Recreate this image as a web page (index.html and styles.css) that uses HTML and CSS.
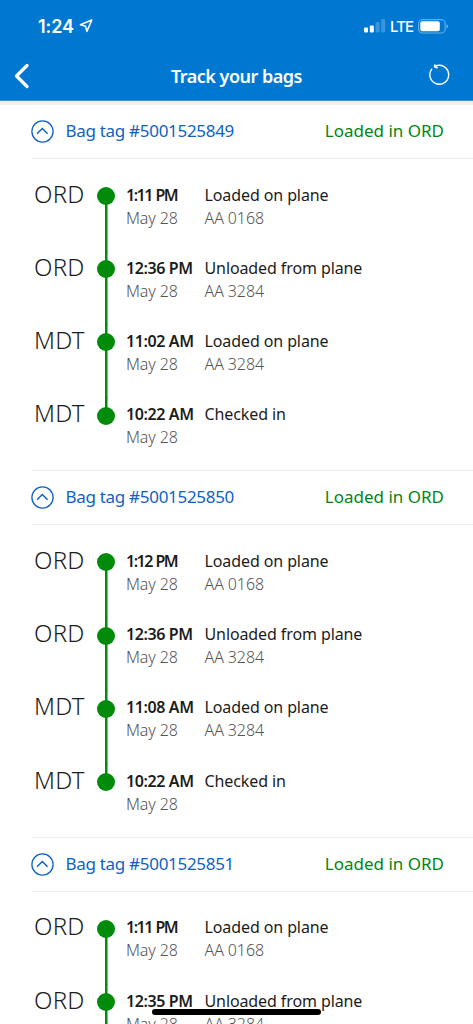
FILE: index.html
```html
<!DOCTYPE html>
<html lang="en">
<head>
    <meta charset="UTF-8">
    <meta name="viewport" content="width=device-width, initial-scale=1.0">
    <title>Track your bags</title>
    <link rel="stylesheet" href="styles.css">
</head>
<body>

<header class="header">
    <div class="status-bar">
        <span class="clock">1:24</span>
        <svg class="location" width="14" height="14" viewBox="0 0 14 14"><path d="M12.8 1 1.4 5.8l5.2 1.4 1.3 5.2z" fill="none" stroke="#fff" stroke-width="1.5" stroke-linejoin="round"/></svg>
        <svg class="signal" width="22" height="14" viewBox="0 0 22 14" fill="#fff">
            <rect x="0" y="8.5" width="4" height="5" rx="1"/>
            <rect x="5.8" y="6.5" width="4" height="7" rx="1"/>
            <rect x="11.6" y="3" width="4" height="10.5" rx="1" opacity=".22"/>
            <rect x="17.2" y="0" width="4" height="13.5" rx="1" opacity=".22"/>
        </svg>
        <span class="network">LTE</span>
        <svg class="battery" width="31" height="15" viewBox="0 0 31 15">
            <rect x=".6" y=".6" width="26.6" height="13.4" rx="4" fill="none" stroke="#fff" stroke-width="1.1" opacity=".4"/>
            <rect x="2.3" y="2.3" width="19.5" height="10" rx="2" fill="#fff"/>
            <path d="M28.5 5v4.6q1.5-.7 1.5-2.3T28.5 5z" fill="#fff" opacity=".45"/>
        </svg>
    </div>
    <div class="nav-bar">
        <svg class="back" width="16" height="26" viewBox="0 0 16 26"><path d="M13 2.5 2.5 13 13 23.5" fill="none" stroke="#fff" stroke-width="3.2" stroke-linecap="round" stroke-linejoin="round"/></svg>
        <h1>Track your bags</h1>
        <svg class="refresh" width="22" height="22" viewBox="0 0 22 22" fill="none" stroke="#fff" stroke-width="1.4">
            <path d="M7.2 2.3A9.4 9.4 0 1 1 4 4.8"/>
            <path d="M7.1.3 6.6 2.7l3 1.3" stroke-width="1.6"/>
        </svg>
    </div>
</header>

<main id="bags"></main>

<div class="home-indicator"></div>

<script src="script.js"></script>
</body>
</html>
```
FILE: styles.css
```css
body {
    margin: 0;
    height: 1024px;
    overflow: hidden;
    background-color: white;
    color: #1c1c1c;
    font-family: "Noto Sans", sans-serif;
}

.header {
    height: 100px;
    background-color: #0078d2;
    border-bottom: 1px solid #4b90c7;
    box-shadow: 0 4px 0 #eef0f3;
    color: white;
}

.status-bar {
    display: flex;
    align-items: center;
    height: 52px;
    padding: 0 24px 0 38px;
}

.clock {
    width: 37px;
    font-family: Inter, sans-serif;
    font-size: 18px;
    font-weight: 600;
    letter-spacing: -0.1px;
}

.location {
    margin-left: 4px;
}

.signal {
    margin-left: auto;
}

.network {
    width: 23px;
    margin: 1px 5px 0 4px;
    font-family: Inter, sans-serif;
    font-size: 15px;
    font-weight: 500;
    letter-spacing: -0.9px;
}

.nav-bar {
    display: grid;
    grid-template-columns: 40px 1fr 40px;
    align-items: center;
    height: 46px;
    padding: 0 23px 0 14px;
}

.back {
    margin-top: 2px;
}

h1 {
    margin: 2px 0 0 9px;
    text-align: center;
    font-size: 18px;
    font-weight: 600;
    letter-spacing: -0.5px;
}

.refresh {
    justify-self: end;
}

#bags {
    padding-top: 3px;
}

.bag {
    height: 366.4px;
    padding-left: 31px;
}

.bag + .bag .bag-header {
    border-top: 1px solid #eeeff1;
}

.bag-header {
    display: flex;
    align-items: center;
    height: 55px;
    box-sizing: border-box;
    border-bottom: 1px solid #eeeff1;
    font-size: 17px;
    line-height: 23px;
}

.tag,
.status {
    padding-bottom: 2px;
}

.tag {
    margin-left: 11.5px;
    color: #0f62c4;
    letter-spacing: -0.3px;
}

.status {
    margin: 0 29px 0 auto;
    color: #008712;
}

.events {
    padding-top: 18.6px;
}

.event {
    display: grid;
    grid-template-columns: 66px 29px 78.5px 1fr;
    height: 73.2px;
}

.airport {
    padding-left: 3px;
    font-size: 24px;
    font-weight: 300;
    line-height: 32px;
    letter-spacing: 0.2px;
}

.track {
    width: 18px;
    margin-bottom: -1px;
    background: linear-gradient(#008c0a, #008c0a) center / 2.5px 100% no-repeat;
}

.dot {
    width: 18px;
    height: 18px;
    margin-top: 9.4px;
    border-radius: 50%;
    background-color: #008c0a;
}

.event:first-child .track {
    background-position: center 18px;
}

.event:nth-child(4) .track {
    background-size: 2.5px 18px;
    background-position: center top;
}

.time,
.detail {
    padding-top: 6px;
    font-size: 16px;
    line-height: 23px;
    white-space: nowrap;
    letter-spacing: -0.1px;
}

.time b {
    font-weight: 600;
    letter-spacing: -0.4px;
}

.time .short {
    letter-spacing: -1.5px;
    word-spacing: 1px;
}

.sub {
    color: #555;
    font-weight: 300;
    letter-spacing: -0.1px;
}

.home-indicator {
    position: absolute;
    left: 152px;
    top: 1009px;
    width: 169px;
    height: 6px;
    border-radius: 3px;
    background-color: black;
}
```
FILE: script.js
```js
const bags = [
    { tag: '5001525849', times: ['1:11 PM', '12:36 PM', '11:02 AM', '10:22 AM'] },
    { tag: '5001525850', times: ['1:12 PM', '12:36 PM', '11:08 AM', '10:22 AM'] },
    { tag: '5001525851', times: ['1:11 PM', '12:35 PM'] }
];

const steps = [
    { airport: 'ORD', action: 'Loaded on plane', flight: 'AA 0168' },
    { airport: 'ORD', action: 'Unloaded from plane', flight: 'AA 3284' },
    { airport: 'MDT', action: 'Loaded on plane', flight: 'AA 3284' },
    { airport: 'MDT', action: 'Checked in', flight: '' }
];

const container = document.getElementById('bags');

bags.forEach(bag => {
    const section = document.createElement('section');
    section.className = 'bag';

    const events = bag.times.map((time, i) => `
        <div class="event">
            <div class="airport">${steps[i].airport}</div>
            <div class="track"><div class="dot"></div></div>
            <div class="time"><b class="${time.length < 8 ? 'short' : ''}">${time}</b><div class="sub">May 28</div></div>
            <div class="detail">${steps[i].action}<div class="sub">${steps[i].flight}</div></div>
        </div>
    `).join('');

    section.innerHTML = `
        <div class="bag-header">
            <svg width="23" height="23" viewBox="0 0 23 23" fill="none" stroke="#0f62c4" stroke-width="1.3"><circle cx="11.5" cy="11.5" r="10.6"/><path d="m6 13.7 5.3-5.2 5.3 5.2" stroke-width="1.5"/></svg>
            <span class="tag">Bag tag #${bag.tag}</span>
            <span class="status">Loaded in ORD</span>
        </div>
        <div class="events">${events}</div>
    `;
    container.appendChild(section);
});
```
